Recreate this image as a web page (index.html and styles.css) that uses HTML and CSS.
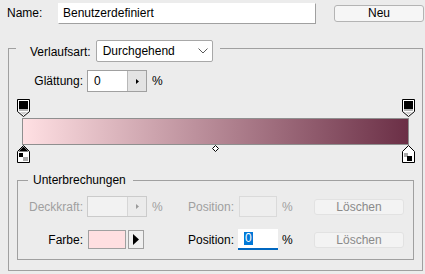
FILE: index.html
```html
<!DOCTYPE html>
<html lang="de">
<head>
<meta charset="utf-8">
<title>Verläufe bearbeiten</title>
<link rel="stylesheet" href="styles.css">
</head>
<body>
<div class="name-row">
  <span class="name-lbl">Name:</span>
  <div class="name-input">Benutzerdefiniert</div>
  <button class="btn-neu">Neu</button>
</div>

<div class="group">
  <div class="ghead">
    <span class="edge-l"></span>
    <span class="type-lbl">Verlaufsart:</span>
    <div class="select">
      <span>Durchgehend</span>
      <svg class="chev" width="10" height="6" viewBox="0 0 10 6"><path d="M0.5 0.5L5 5L9.5 0.5" fill="none" stroke="#5a5a5a"/></svg>
    </div>
    <span class="edge-r"></span>
  </div>

  <div class="gbody">
    <div class="smooth">
      <span class="col-lbl">Glättung:</span>
      <div class="spin">
        <span class="val">0</span>
        <span class="sbtn"><svg width="3" height="5" viewBox="0 0 3 5"><path d="M0 0L3 2.5L0 5Z" fill="#000"/></svg></span>
      </div>
      <span class="pct">%</span>
    </div>

    <div class="ramp">
      <div class="track top">
        <svg class="stop l" width="13" height="18" viewBox="0 0 13 18">
          <path d="M0.5 0.5H12.5V12.5L6.5 17.5L0.5 12.5Z" fill="#fff" stroke="#000"/>
          <rect x="2" y="2" width="9" height="8" fill="#000"/>
          <rect x="2" y="10" width="9" height="2" fill="#b4b4b4"/>
          <path d="M3 13H10L6.5 16Z" fill="#d0d0d0"/>
        </svg>
        <svg class="stop r" width="13" height="18" viewBox="0 0 13 18">
          <path d="M0.5 0.5H12.5V12.5L6.5 17.5L0.5 12.5Z" fill="#fff" stroke="#000"/>
          <rect x="2" y="2" width="9" height="8" fill="#000"/>
          <rect x="2" y="10" width="9" height="2" fill="#b4b4b4"/>
          <path d="M3 13H10L6.5 16Z" fill="#d0d0d0"/>
        </svg>
      </div>
      <div class="bar"></div>
      <div class="track bot">
        <svg class="stop l" width="13" height="18" viewBox="0 0 13 18">
          <path d="M6.5 0.5L12.5 6.5V17.5H0.5V6.5Z" fill="#fff" stroke="#000"/>
          <path d="M6.5 1.5L11.5 6.5H1.5Z" fill="#000"/>
          <rect x="2" y="8" width="4" height="4" fill="#000"/>
          <rect x="6" y="12" width="5" height="4" fill="#a8a8a8"/>
        </svg>
        <svg class="mid" width="7" height="7" viewBox="0 0 7 7"><path d="M3.5 0.5L6.5 3.5L3.5 6.5L0.5 3.5Z" fill="#fff" stroke="#000"/></svg>
        <svg class="stop r" width="13" height="18" viewBox="0 0 13 18">
          <path d="M6.5 0.5L12.5 6.5V17.5H0.5V6.5Z" fill="#fff" stroke="#000"/>
          <rect x="2" y="8" width="4" height="4" fill="#a8a8a8"/>
          <rect x="5" y="11" width="5" height="5" fill="#000"/>
        </svg>
      </div>
    </div>

    <div class="sub">
      <div class="shead">
        <span class="edge-l"></span>
        <span class="legend">Unterbrechungen</span>
        <span class="edge-r"></span>
      </div>
      <div class="sbody">
        <div class="srow">
          <span class="row-lbl dis">Deckkraft:</span>
          <div class="spin dis">
            <span class="val"></span>
            <span class="sbtn"><svg width="3" height="5" viewBox="0 0 3 5"><path d="M0 0L3 2.5L0 5Z" fill="#9a9a9a"/></svg></span>
          </div>
          <span class="pct p1 dis">%</span>
          <span class="pos-lbl p1 dis">Position:</span>
          <div class="posbox p1 dis"></div>
          <span class="pct p2 dis">%</span>
          <button class="btn-del">Löschen</button>
        </div>
        <div class="srow">
          <span class="row-lbl">Farbe:</span>
          <div class="swatch"></div>
          <span class="arrow-btn"><svg width="6" height="11" viewBox="0 0 6 11"><path d="M0 0L6 5.5L0 11Z" fill="#000"/></svg></span>
          <span class="pos-lbl p2">Position:</span>
          <div class="posbox p2 active"><span class="sel">0</span></div>
          <span class="pct p3">%</span>
          <button class="btn-del">Löschen</button>
        </div>
      </div>
    </div>
  </div>
</div>
</body>
</html>
```

FILE: styles.css
```css
* { box-sizing: border-box; }

body {
  margin: 0;
  width: 425px;
  height: 274px;
  overflow: hidden;
  background: #ececec;
  font: 12px "Liberation Sans", Arial, sans-serif;
  color: #000;
}

/* name row */
.name-row {
  display: flex;
  align-items: flex-start;
  height: 40px;
  padding: 3px 0 0 7px;
}
.name-lbl { width: 51px; line-height: 21px; }
.name-input {
  width: 258px;
  height: 21px;
  background: #fff;
  border: 1px solid;
  border-color: #fff #a0a0a0 #a0a0a0 #fff;
  padding-left: 4px;
  line-height: 19px;
}
.btn-neu {
  margin: 2px 0 0 18px;
  width: 90px;
  height: 17px;
  padding: 0;
  border: 1px solid #b4b4b4;
  border-radius: 3px;
  background: #f6f6f6;
  font: inherit;
  color: #000;
  line-height: 15px;
  text-align: center;
}

/* group box */
.group { margin-left: 8px; width: 415px; }
.ghead { display: flex; height: 22px; }
.edge-l {
  border-top: 1px solid #a0a0a0;
  border-left: 1px solid #a0a0a0;
}
.edge-r {
  flex: 1;
  border-top: 1px solid #a0a0a0;
  border-right: 1px solid #a0a0a0;
}
.ghead .edge-l { width: 8px; margin-top: 8px; }
.ghead .edge-r { margin: 8px 0 0 7px; }
.type-lbl { margin-left: 14px; line-height: 22px; padding-top: 1px; }
.select {
  margin-left: 5px;
  width: 117px;
  height: 22px;
  background: #fff;
  border: 1px solid #a8a8a8;
  border-radius: 2px;
  display: flex;
  align-items: center;
  padding: 0 4px 0 6px;
}
.chev { margin-left: auto; }

.gbody {
  border: 1px solid #a0a0a0;
  border-top: 0;
  padding: 8px 0 10px;
}

.smooth { display: flex; align-items: center; height: 22px; }
.col-lbl { width: 74px; text-align: right; }
.spin {
  margin-left: 4px;
  width: 60px;
  height: 22px;
  display: flex;
  border: 1px solid #a0a0a0;
  background: #fff;
}
.spin .val { flex: 1; padding-left: 6px; line-height: 20px; }
.spin .sbtn {
  width: 19px;
  border-left: 1px solid #b8b8b8;
  background: #e3e3e3;
  display: flex;
  align-items: center;
  justify-content: center;
}
.pct { margin-left: 5px; width: 11px; }

/* gradient ramp */
.ramp { padding-top: 7px; }
.track { position: relative; margin-left: 13px; width: 387px; }
.track.top { height: 19px; }
.track.bot { height: 18px; }
.stop { position: absolute; top: 0; display: block; }
.stop.l { left: -5px; }
.stop.r { right: -6px; }
.mid { position: absolute; left: 190px; top: 0; display: block; }
.bar {
  margin-left: 13px;
  width: 387px;
  height: 27px;
  border: 1px solid #8f8f8f;
  background: linear-gradient(to right, #ffe0e3, #6b2f46);
}

/* stops sub-group */
.sub { margin: 10px 0 0 8px; width: 397px; }
.shead { display: flex; height: 14px; }
.shead .edge-l { width: 11px; margin-top: 7px; }
.shead .edge-r { margin: 7px 0 0 7px; }
.legend { margin-left: 5px; line-height: 14px; }
.sbody {
  border: 1px solid #a0a0a0;
  border-top: 0;
  padding: 9px 0;
}
.srow { display: flex; align-items: center; height: 21px; }
.srow + .srow { margin-top: 12px; }
.srow .spin { height: 21px; }
.srow .spin .val { line-height: 19px; }
.row-lbl { width: 65px; text-align: right; }
.dis { color: #a0a0a0; }

.spin.dis { border-color: #cbcbcb; background: #f2f2f2; }
.spin.dis .sbtn { background: #ebebeb; border-left-color: #d6d6d6; }

.pos-lbl { text-align: right; }
.pos-lbl.p1 { width: 71px; }
.pos-lbl.p2 { width: 90px; }
.posbox { height: 21px; }
.posbox.p1 {
  margin-left: 5px;
  width: 38px;
  border: 1px solid #dadada;
  background: #eeeeee;
}
.posbox.p2 {
  margin-left: 4px;
  width: 40px;
  background: #fff;
  border-bottom: 2px solid #0067c0;
  padding: 3px 0 0 6px;
  line-height: 13px;
}
.sel { background: #0078d7; color: #fff; display: inline-block; padding: 0 1px; }
.pct.p1 { margin-left: 5px; }
.pct.p2 { margin-left: 5px; }
.pct.p3 { margin-left: 4px; }

.btn-del {
  margin-left: 21px;
  width: 90px;
  height: 16px;
  padding: 0;
  border: 1px solid #e2e2e2;
  border-radius: 3px;
  background: #f3f3f3;
  font: inherit;
  color: #8a8a8a;
  line-height: 14px;
  text-align: center;
}

.swatch {
  align-self: flex-start;
  margin: 1px 0 0 5px;
  width: 38px;
  height: 19px;
  border: 1px solid #a0a0a0;
  background: #ffdfe1;
}
.arrow-btn {
  align-self: flex-start;
  margin: 1px 0 0 2px;
  width: 16px;
  height: 19px;
  border: 1px solid #a0a0a0;
  background: #f0f0f0;
  display: flex;
  align-items: center;
  justify-content: center;
}
```
